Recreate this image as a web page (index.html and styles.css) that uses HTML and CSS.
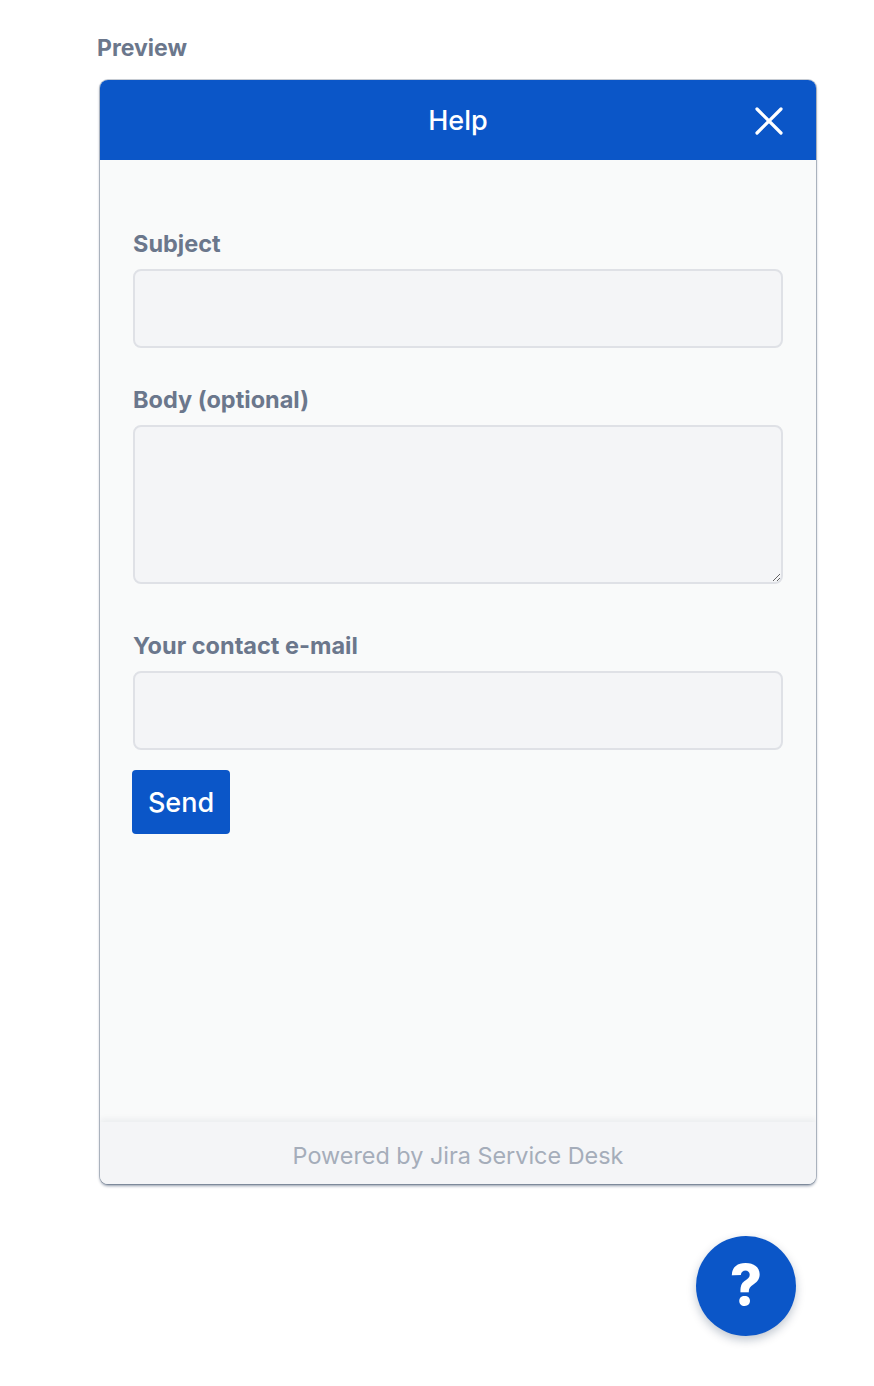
FILE: index.html
```html
<!DOCTYPE html>
<html lang="en">
<head>
<meta charset="utf-8">
<title>Preview</title>
<link rel="stylesheet" href="styles.css">
</head>
<body>
<div class="page">
  <div class="preview-title">Preview</div>
  <div class="widget">
    <div class="widget-header">
      <span class="widget-title">Help</span>
      <button class="close-btn" aria-label="Close">
        <svg width="30" height="30" viewBox="0 0 30 30"><path d="M3 3 L27 27 M27 3 L3 27" stroke="#fff" stroke-width="3.2" stroke-linecap="round" fill="none"/></svg>
      </button>
    </div>
    <div class="widget-body">
      <label class="field-label">Subject</label>
      <input class="field-input" type="text">
      <label class="field-label">Body (optional)</label>
      <textarea class="field-textarea"></textarea>
      <label class="field-label">Your contact e-mail</label>
      <input class="field-input last" type="text">
      <button class="send-btn">Send</button>
    </div>
    <div class="widget-footer">Powered by Jira Service Desk</div>
  </div>
  <div class="fab-row">
    <button class="fab">?</button>
  </div>
</div>
</body>
</html>
```

FILE: styles.css
```css
* { box-sizing: border-box; }
html, body { margin: 0; padding: 0; background: #fff; }
body { font-family: Inter, "Noto Sans", Arial, sans-serif; }
.page {
  padding: 34px 58px 0 100px;
  width: 874px;
  height: 1386px;
}
.preview-title {
  font-size: 23px;
  line-height: 28px;
  font-weight: 700;
  color: #6b778c;
  margin-left: -3px;
  margin-bottom: 18px;
}
.widget {
  width: 716px;
  height: 1104px;
  border-radius: 8px;
  overflow: hidden;
  display: flex;
  flex-direction: column;
  background: #f9fafa;
  box-shadow: 0 0 0 1px rgba(9, 30, 66, 0.22), 0 2px 3px rgba(9, 30, 66, 0.45);
}
.widget-header {
  height: 80px;
  flex: none;
  background: #0b56c8;
  display: flex;
  align-items: center;
  justify-content: center;
  position: relative;
}
.widget-title {
  color: #fff;
  font-size: 27px;
  font-weight: 500;
}
.close-btn {
  position: absolute;
  right: 32px;
  top: 26px;
  width: 30px;
  height: 30px;
  padding: 0;
  border: 0;
  background: none;
  display: flex;
}
.widget-body {
  flex: 1;
  padding: 70px 33px 0 33px;
  display: flex;
  flex-direction: column;
  align-items: flex-start;
}
.field-label {
  font-size: 23.5px;
  line-height: 28px;
  font-weight: 700;
  color: #6b778c;
  margin-bottom: 11px;
}
.field-input, .field-textarea {
  width: 100%;
  background: #f4f5f7;
  border: 2px solid #dfe1e6;
  border-radius: 8px;
  margin: 0;
  font: inherit;
  display: block;
}
.field-input {
  height: 79px;
  margin-bottom: 38px;
}
.field-textarea {
  height: 159px;
  resize: vertical;
  margin-bottom: 48px;
}
.field-input.last { margin-bottom: 20px; }
.send-btn {
  width: 98px;
  height: 64px;
  background: #0b56c8;
  color: #fff;
  border: 0;
  border-radius: 4px;
  font-family: inherit;
  font-size: 27px;
  font-weight: 500;
  padding: 0;
  margin-left: -1px;
}
.widget-footer {
  height: 62px;
  flex: none;
  background: #f4f5f7;
  color: #a5adba;
  font-size: 23.4px;
  padding-top: 4px;
  display: flex;
  align-items: center;
  justify-content: center;
  box-shadow: 0 -3px 6px rgba(9, 30, 66, 0.06);
  position: relative;
}
.fab-row {
  width: 716px;
  display: flex;
  justify-content: flex-end;
  padding-right: 20px;
  margin-top: 52px;
}
.fab {
  width: 100px;
  height: 100px;
  border-radius: 50%;
  background: #0b56c8;
  color: #fff;
  border: 0;
  font-family: Inter, Arial, sans-serif;
  font-weight: 800;
  font-size: 56px;
  line-height: 1;
  padding: 0 0 2px 0;
  box-shadow: 0 4px 10px rgba(9, 30, 66, 0.25);
}
```
